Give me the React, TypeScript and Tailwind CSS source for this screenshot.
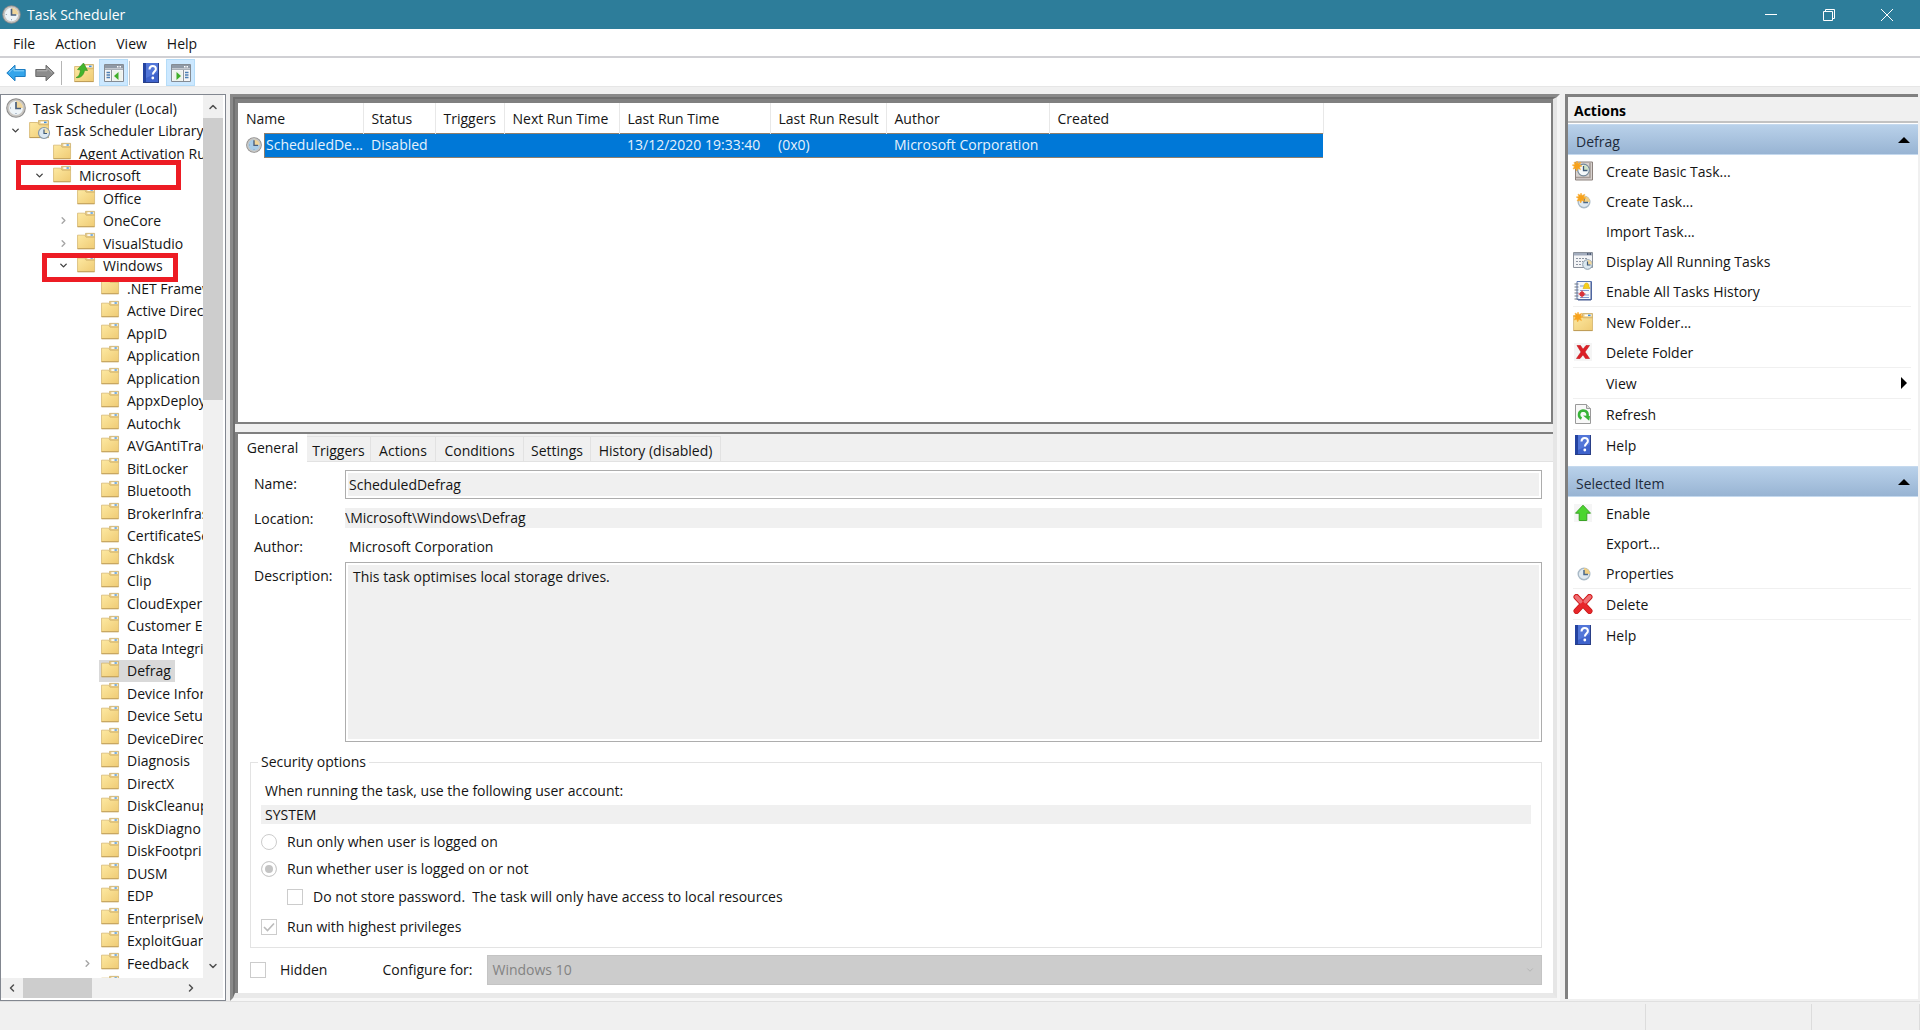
import React from 'react';
import clsx from 'clsx';
import { ChevronDown, ChevronLeft, ChevronRight, ChevronUp } from 'lucide-react';

type TreeNode = { label: string; level: number; state?: 'open' | 'closed'; selected?: boolean };

const TREE: TreeNode[] = [
  { label: 'Task Scheduler (Local)', level: 0 },
  { label: 'Task Scheduler Library', level: 1, state: 'open' },
  { label: 'Agent Activation Ru', level: 2 },
  { label: 'Microsoft', level: 2, state: 'open' },
  { label: 'Office', level: 3 },
  { label: 'OneCore', level: 3, state: 'closed' },
  { label: 'VisualStudio', level: 3, state: 'closed' },
  { label: 'Windows', level: 3, state: 'open' },
  { label: '.NET Framew', level: 4 },
  { label: 'Active Direc', level: 4 },
  { label: 'AppID', level: 4 },
  { label: 'Application', level: 4 },
  { label: 'Application', level: 4 },
  { label: 'AppxDeploy', level: 4 },
  { label: 'Autochk', level: 4 },
  { label: 'AVGAntiTrac', level: 4 },
  { label: 'BitLocker', level: 4 },
  { label: 'Bluetooth', level: 4 },
  { label: 'BrokerInfras', level: 4 },
  { label: 'CertificateSe', level: 4 },
  { label: 'Chkdsk', level: 4 },
  { label: 'Clip', level: 4 },
  { label: 'CloudExper', level: 4 },
  { label: 'Customer E', level: 4 },
  { label: 'Data Integri', level: 4 },
  { label: 'Defrag', level: 4, selected: true },
  { label: 'Device Infor', level: 4 },
  { label: 'Device Setu', level: 4 },
  { label: 'DeviceDirec', level: 4 },
  { label: 'Diagnosis', level: 4 },
  { label: 'DirectX', level: 4 },
  { label: 'DiskCleanup', level: 4 },
  { label: 'DiskDiagno', level: 4 },
  { label: 'DiskFootpri', level: 4 },
  { label: 'DUSM', level: 4 },
  { label: 'EDP', level: 4 },
  { label: 'EnterpriseM', level: 4 },
  { label: 'ExploitGuar', level: 4 },
  { label: 'Feedback', level: 4, state: 'closed' },
  { label: '', level: 4 },
];

const INDENT = ['pl-[5px]', 'pl-[4px]', 'pl-[28px]', 'pl-[52px]', 'pl-[76px]'];

const COLUMNS = [
  { label: 'Name', width: 'w-[125px]', value: 'ScheduledDe...' },
  { label: 'Status', width: 'w-[72px]', value: 'Disabled' },
  { label: 'Triggers', width: 'w-[69px]', value: '' },
  { label: 'Next Run Time', width: 'w-[115px]', value: '' },
  { label: 'Last Run Time', width: 'w-[151px]', value: '13/12/2020 19:33:40' },
  { label: 'Last Run Result', width: 'w-[116px]', value: '(0x0)' },
  { label: 'Author', width: 'w-[163px]', value: 'Microsoft Corporation' },
  { label: 'Created', width: 'w-[274px]', value: '' },
];

const TABS = [
  { label: 'Triggers', width: 'w-[64px]' },
  { label: 'Actions', width: 'w-[65px]' },
  { label: 'Conditions', width: 'w-[88px]' },
  { label: 'Settings', width: 'w-[67px]' },
  { label: 'History (disabled)', width: 'w-[130px]' },
];

function ClockIcon({ className, tint = '#eef4f8' }: { className?: string; tint?: string }) {
  return (
    <svg viewBox="0 0 20 20" className={className} aria-hidden="true">
      <circle cx="10" cy="10" r="9.800" fill="#8b8b8b" />
      <circle cx="10" cy="10" r="8.800" fill="#c9c6c2" />
      <circle cx="10" cy="10" r="7" fill={tint} />
      <path d="M10 10V3a7 7 0 0 1 7 7z" fill="#f0d59a" />
      <path d="M10 4v6.500h5" fill="none" stroke="#4a5f7c" strokeWidth="1.700" />
      <path d="M10 16v-1M4 10h1" stroke="#7a8fa5" strokeWidth="1" />
    </svg>
  );
}

function SmallClockIcon() {
  return (
    <svg viewBox="0 0 20 20" className="size-5" aria-hidden="true">
      <circle cx="11" cy="11" r="5.800" fill="#dfe9f1" stroke="#a9b9c6" strokeWidth="1.400" />
      <path d="M11 11V5a6 6 0 0 1 6 6z" fill="#f1cf83" />
      <path d="M11 7v4.500h4" fill="none" stroke="#4b6a8c" strokeWidth="1.500" />
    </svg>
  );
}

function Star({ x, y }: { x: number; y: number }) {
  return (
    <path
      transform={`translate(${x} ${y})`}
      d="M4 0l1 2.500 2.800-1.200-1.200 2.600L9 5 6.500 6l1 2.600-2.600-1.200L3.600 10 2.800 7.400 0 8l1.400-2.400L-.8 4l2.500-.4L1 1l2.300 1.200z"
      fill="#f7a21b"
      stroke="#f9ae38"
      strokeWidth=".6"
    />
  );
}

function FolderIcon({ variant }: { variant?: 'clock' | 'new' | 'up' }) {
  return (
    <svg viewBox="0 0 20 20" className={clsx('overflow-visible', variant ? 'size-5' : 'size-[18px]')} aria-hidden="true">
      <defs>
        <linearGradient id="folderFill" x1="0" y1="0" x2="1" y2="1">
          <stop offset="0" stopColor="#fde9a2" />
          <stop offset="1" stopColor="#efcb74" />
        </linearGradient>
      </defs>
      <path d="M9.500 4V1.500h10V6h-10z" fill="#e8cd8b" stroke="#c9ab66" strokeWidth=".8" />
      <path d="M11.500 2.500h7v1.800h-7z" fill="#fff" />
      <path d="M15 2.600h2.600v1.500H15z" fill="#3f8fdc" />
      <path d="M.6 3.500h8l1.500 2.300h9.400v12.700H.6z" fill="url(#folderFill)" stroke="#d3b26a" strokeWidth=".8" />
      <path d="M.6 18.600h18.900" stroke="#bd9b55" strokeWidth="1" />
      {variant === 'clock' && (
        <g>
          <circle cx="15" cy="14" r="5.500" fill="#dbe8f1" stroke="#8799a8" strokeWidth="1.200" />
          <path d="M15 14V9a5 5 0 0 1 5 5z" fill="#f1e2b0" />
          <path d="M15 10.500v4h3" fill="none" stroke="#3e5a78" strokeWidth="1.200" />
        </g>
      )}
      {variant === 'new' && <Star x={1} y={0} />}
      {variant === 'up' && (
        <path d="M2 14.500C5 14 6 10.500 6.500 7L3.500 6.500 9.500 0l4 7.500-3-.2C10 11.500 7 15.500 2 14.500z" fill="#42b52c" stroke="#2d8c1d" strokeWidth=".6" />
      )}
    </svg>
  );
}

function HelpIcon() {
  return (
    <svg viewBox="0 0 18 20" className="h-5 w-[18px]" aria-hidden="true">
      <path d="M1 0h16v20H1z" fill="#3f63cc" />
      <path d="M1 0h3v20H1z" fill="#2443a0" />
      <path d="M4 0h13v9L4 15z" fill="#5f83e0" opacity=".6" />
      <path d="M1 19h16v1H1zM16 0h1v20h-1z" fill="#2a3f86" />
      <path d="M7.500 6.500C7.500 4 9 3 10.700 3s3.200 1 3.200 3c0 2.500-3 2.700-3 5.500" fill="none" stroke="#fff" strokeWidth="2" />
      <circle cx="10.800" cy="15" r="1.400" fill="#fff" />
    </svg>
  );
}

function PaneIcon({ flip }: { flip?: boolean }) {
  return (
    <svg viewBox="0 0 20 18" className="h-[18px] w-5" aria-hidden="true">
      <path d="M.5.5h19v17H.5z" fill="#f5f6f7" stroke="#858c94" />
      <path d="M1 1h18v3.500H1z" fill="#8f99a6" />
      <path d="M13 2h1.500v1.500H13zM15.500 2H17v1.500h-1.500z" fill="#fff" />
      <path d="M1 5.500h18" stroke="#a9b0b8" />
      <g transform={flip ? 'translate(20 0) scale(-1 1)' : undefined}>
        <path d="M7.500 6v11" stroke="#8f969e" />
        <path d="M2.500 8.500H6M2.500 11H6M2.500 13.500H6" stroke="#4d7fb5" strokeWidth="1.300" />
        <path d="M9 7h9v10H9z" fill="#eef3ec" />
        <path d="M14.500 8v8L10 12z" fill="#3fae2a" />
      </g>
    </svg>
  );
}

function ToolbarArrow({ forward }: { forward?: boolean }) {
  return (
    <svg viewBox="0 0 20 18" className="h-[18px] w-5" aria-hidden="true">
      <g transform={forward ? 'translate(20 0) scale(-1 1)' : undefined}>
        <path
          d="M.8 9L9 1.200v4.300h10.200v7H9v4.300z"
          fill={forward ? '#8c8c8c' : '#35a5ea'}
          stroke={forward ? '#6c6c6c' : '#1c7cc2'}
        />
        <path d="M3 8.500L8 3.800v3h10" fill="none" stroke={forward ? '#b5b5b5' : '#8fd5fb'} />
      </g>
    </svg>
  );
}

function BasicTaskIcon() {
  return (
    <svg viewBox="0 0 20 20" className="size-5 overflow-visible" aria-hidden="true">
      <path d="M2.500 1h17v18h-17z" fill="#d8d2cf" stroke="#8b817c" />
      <path d="M17 2v14.500H3" fill="none" stroke="#a39994" strokeWidth="1.500" />
      <circle cx="10.500" cy="9" r="5.800" fill="#f4f8fa" stroke="#758b9b" strokeWidth="1.200" />
      <path d="M10.500 9V4a5 5 0 0 1 5 5z" fill="#cfe3c3" />
      <path d="M10.500 5v4.500h4" fill="none" stroke="#3e5a78" strokeWidth="1.300" />
      <Star x={0} y={0} />
    </svg>
  );
}

function CreateTaskIcon() {
  return (
    <svg viewBox="0 0 20 20" className="size-5" aria-hidden="true">
      <circle cx="11" cy="11" r="5.800" fill="#dfe9f1" stroke="#a9b9c6" strokeWidth="1.400" />
      <path d="M11 11V5a6 6 0 0 1 6 6z" fill="#f1cf83" />
      <path d="M11 7v4.500h4" fill="none" stroke="#4b6a8c" strokeWidth="1.500" />
      <Star x={4} y={2} />
    </svg>
  );
}

function RunningTasksIcon() {
  return (
    <svg viewBox="0 0 20 18" className="h-[18px] w-5" aria-hidden="true">
      <path d="M.5.500h19v15H.5z" fill="#f3f4f6" stroke="#8b919b" />
      <path d="M1 1h18v2.500H1z" fill="#a2acbd" />
      <path d="M14 1.200h1.500v1.500H14zM16.500 1.200H18v1.500h-1.500z" fill="#33415c" />
      <path d="M3 6.500h12M3 9.500h7M3 12.500h5" stroke="#8c94a0" strokeDasharray="2 1" />
      <circle cx="14.500" cy="12.500" r="4.800" fill="#dce8ef" stroke="#8799a8" />
      <path d="M14.500 12.500V8A4.500 4.500 0 0 1 19 12.500z" fill="#f0d59a" />
      <path d="M14.500 9.500V13h3" fill="none" stroke="#3e5a78" strokeWidth="1.200" />
    </svg>
  );
}

function HistoryIcon() {
  return (
    <svg viewBox="0 0 20 20" className="size-5" aria-hidden="true">
      <path d="M4 .5h14.500v18H4z" fill="#f4f7fc" stroke="#5b77b3" />
      <path d="M18 1v18H5" fill="none" stroke="#44598f" />
      <path d="M1.500 3h4M1.500 6h4M1.500 9h4M1.500 12h4M1.500 15h4M1.500 18h4" stroke="#6f7782" strokeWidth="1.200" />
      <path d="M7 5h9M7 9.500h9M7 14h9M7 16.500h9" stroke="#7f9bd0" />
      <path d="M13.500 2c2 0 2.500 2 2.500 3.500l1 2h-7l1-2C11 4 11.500 2 13.500 2z" fill="#f5cf1c" stroke="#dcae12" strokeWidth=".6" />
      <circle cx="9" cy="13" r="2.500" fill="#d8323b" />
      <path d="M9 9.500v7M5.500 13h7" stroke="#d8323b" strokeWidth="1.200" />
    </svg>
  );
}

function CrossIcon({ large }: { large?: boolean }) {
  if (large) {
    return (
      <svg viewBox="0 0 20 20" className="size-5" aria-hidden="true">
        <path d="M3.500 3l13 14M16.500 3l-13 14" stroke="#c51a1a" strokeWidth="6" strokeLinecap="round" />
        <path d="M3.500 3l13 14M16.500 3l-13 14" stroke="#e8262a" strokeWidth="4.500" strokeLinecap="round" />
        <path d="M3.500 3l4 4.300M16.500 3l-4 4.300" stroke="#ee7074" strokeWidth="4" strokeLinecap="round" />
      </svg>
    );
  }
  return (
    <svg viewBox="0 0 18 18" className="size-[18px]" aria-hidden="true">
      <path d="M0 0h18v18H0z" fill="#f5f5f5" />
      <path d="M3 2.500h3.500L9 6.200l3-3.700h3.500L11 9l4.500 6.500h-4L9 11.800l-3 3.700H2.500L7 9z" fill="#dc1f26" stroke="#c3151c" strokeWidth=".6" />
    </svg>
  );
}

function RefreshIcon() {
  return (
    <svg viewBox="0 0 18 20" className="h-5 w-[18px]" aria-hidden="true">
      <path d="M1.500.5h11l4 4v15h-15z" fill="#f8f8f8" stroke="#9a9a9a" />
      <path d="M12.500.5v4h4" fill="#ddd" stroke="#9a9a9a" />
      <path d="M7.500 14.500C4 13 4 7 9 6.500c4.500 0 5.500 4 4 7" fill="none" stroke="#36b336" strokeWidth="2.600" />
      <path d="M9 11.500l7 .5-.8 4.800z" fill="#36b336" />
    </svg>
  );
}

function EnableIcon() {
  return (
    <svg viewBox="0 0 18 18" className="size-[18px]" aria-hidden="true">
      <path d="M0 0h18v18H0z" fill="#f5f5f5" />
      <path d="M9 1.200l7.500 8h-3.700v7.300H5.200V9.200H1.500z" fill="#4cd52f" stroke="#3aa326" strokeLinejoin="round" />
    </svg>
  );
}

type Action = { label: string; icon?: React.ReactNode; submenu?: boolean };

const FOLDER_ACTIONS: Action[][] = [
  [
    { label: 'Create Basic Task...', icon: <BasicTaskIcon /> },
    { label: 'Create Task...', icon: <CreateTaskIcon /> },
    { label: 'Import Task...' },
    { label: 'Display All Running Tasks', icon: <RunningTasksIcon /> },
    { label: 'Enable All Tasks History', icon: <HistoryIcon /> },
  ],
  [
    { label: 'New Folder...', icon: <FolderIcon variant="new" /> },
    { label: 'Delete Folder', icon: <CrossIcon /> },
  ],
  [{ label: 'View', submenu: true }],
  [{ label: 'Refresh', icon: <RefreshIcon /> }],
  [{ label: 'Help', icon: <HelpIcon /> }],
];

const ITEM_ACTIONS: Action[][] = [
  [
    { label: 'Enable', icon: <EnableIcon /> },
    { label: 'Export...' },
    { label: 'Properties', icon: <SmallClockIcon /> },
  ],
  [{ label: 'Delete', icon: <CrossIcon large /> }],
  [{ label: 'Help', icon: <HelpIcon /> }],
];

function ActionSection({ title, groups }: { title: string; groups: Action[][] }) {
  return (
    <section className="mb-[6px]">
      <button className="flex h-[31px] w-full items-center justify-between border-y border-[#c5d9ee] bg-linear-to-b from-[#b9d1ea] to-[#98b4d3] pr-[8px] pl-[8px] text-[#1e2b3c]">
        <span className="pt-1">{title}</span>
        <svg viewBox="0 0 12 6" className="h-[6px] w-3" aria-hidden="true">
          <path d="M6 0l6 6H0z" />
        </svg>
      </button>
      {groups.map((group, i) => (
        <div key={i} className="mr-[7px] ml-[5px] border-[#f0f0f0] pt-px not-first-of-type:border-t not-first-of-type:pt-0">
          {group.map((action) => (
            <button key={action.label} className="flex h-[30px] w-full items-center">
              <span className="flex w-5 justify-center">{action.icon}</span>
              <span className="ml-[13px] flex-1 pt-px text-left">{action.label}</span>
              {action.submenu && (
                <svg viewBox="0 0 6 12" className="mr-[4px] h-3 w-[6px]" aria-hidden="true">
                  <path d="M0 0l6 6-6 6z" />
                </svg>
              )}
            </button>
          ))}
        </div>
      ))}
    </section>
  );
}

function TreeRow({ node }: { node: TreeNode }) {
  return (
    <li className={clsx('flex items-center whitespace-nowrap odd:h-[22px] even:h-[23px]', INDENT[node.level])}>
      {node.level > 0 && (
        <span className="mr-1 flex w-5 shrink-0 justify-center">
          {node.state === 'open' && <ChevronDown className="size-[11px] text-[#404040]" strokeWidth={3} />}
          {node.state === 'closed' && <ChevronRight className="size-[11px] text-[#a6a6a6]" strokeWidth={3} />}
        </span>
      )}
      <span className={clsx('-ml-[2px] flex h-[22px] shrink-0 items-center pr-[4px] pl-[2px]', node.selected && 'bg-[#d9d9d9]')}>
        <span className={clsx('shrink-0', node.level === 0 ? 'mr-[7px]' : node.level === 1 ? 'mr-[7px] pb-1' : 'mr-[8px] pb-1')}>
          {node.level === 0 ? <ClockIcon className="size-5" /> : <FolderIcon variant={node.level === 1 ? 'clock' : undefined} />}
        </span>
        <span className="pt-px">{node.label}</span>
      </span>
    </li>
  );
}

function TreePane() {
  return (
    <aside className="flex w-[226px] shrink-0 flex-col border border-[#828790] bg-white pr-[2px] pb-[2px]">
      <div className="flex min-h-0 flex-1">
        <div className="relative min-w-0 flex-1 overflow-hidden pt-[2px]">
          <ul>
            {TREE.map((node, i) => (
              <TreeRow key={i} node={node} />
            ))}
          </ul>
          {/* highlight boxes drawn over the tree */}
          <div className="absolute top-[65px] left-[15px] h-[30px] w-[165px] border-[5px] border-[#ed1c24]" />
          <div className="absolute top-[158px] left-[41px] h-[29px] w-[136px] border-[5px] border-[#ed1c24]" />
        </div>
        <div className="flex w-5 flex-col items-center bg-[#f0f0f0]">
          <button className="flex h-[23px] w-full items-center justify-center" aria-label="Scroll up">
            <ChevronUp className="size-3 text-[#505050]" strokeWidth={3} />
          </button>
          <div className="h-[282px] w-full bg-[#cdcdcd]" />
          <button className="mt-auto flex h-6 w-full items-center justify-center" aria-label="Scroll down">
            <ChevronDown className="size-3 text-[#505050]" strokeWidth={3} />
          </button>
        </div>
      </div>
      <div className="flex h-5 items-center bg-[#f0f0f0]">
        <button className="flex h-5 w-[22px] items-center justify-center" aria-label="Scroll left">
          <ChevronLeft className="size-3 text-[#505050]" strokeWidth={3} />
        </button>
        <div className="h-full w-[69px] bg-[#cdcdcd]" />
        <button className="mr-[21px] ml-auto flex h-5 w-[23px] items-center justify-center" aria-label="Scroll right">
          <ChevronRight className="size-3 text-[#505050]" strokeWidth={3} />
        </button>
      </div>
    </aside>
  );
}

function TaskTable() {
  return (
    <table className="table-fixed border-collapse text-left whitespace-nowrap">
      <thead>
        <tr className="h-[30px]">
          {COLUMNS.map((col) => (
            <th key={col.label} className={clsx('border-r border-[#e8e8e8] p-0 pt-[2px] pl-[8px] font-normal', col.width)}>
              {col.label}
            </th>
          ))}
        </tr>
      </thead>
      <tbody>
        <tr className="h-6 text-[#e6f2fc]">
          {COLUMNS.map((col, i) => (
            <td key={col.label} className={clsx('p-0', i > 0 && 'border-y border-[#8f7f6d] bg-[#0078d7] pl-[8px]')}>
              {i === 0 ? (
                <div className="flex h-6 items-center pl-[8px]">
                  <ClockIcon className="mr-[2px] size-4 shrink-0" tint="#a9cde8" />
                  <span className="-my-px flex h-[25px] flex-1 items-center overflow-hidden border-y border-l border-[#8f7f6d] bg-[#0078d7] pl-px">{col.value}</span>
                </div>
              ) : (
                col.value
              )}
            </td>
          ))}
        </tr>
      </tbody>
    </table>
  );
}

function GeneralTab() {
  const box = 'size-4 shrink-0 appearance-none border border-[#cccccc]';
  return (
    <div className="flex flex-1 flex-col bg-white pr-[11px] pl-[12px]">
      <div className="grid grid-cols-[91px_1fr] pt-[8px] pl-[4px]">
        <label htmlFor="name" className="pt-[4px]">Name:</label>
        <input id="name" readOnly defaultValue="ScheduledDefrag" className="h-[29px] border border-[#adadad] bg-[#f0f0f0] px-[3px] shadow-[inset_0_0_0_2px_#fff]" />
        <label htmlFor="location" className="mt-[10px]">Location:</label>
        <input id="location" readOnly defaultValue="\Microsoft\Windows\Defrag" className="mt-[9px] h-5 bg-[#f0f0f0]" />
        <span className="mt-[8px]">Author:</span>
        <span className="mt-[8px] pl-[4px]">Microsoft Corporation</span>
        <label htmlFor="description" className="mt-[9px]">Description:</label>
        <textarea
          id="description"
          readOnly
          defaultValue="This task optimises local storage drives."
          className="mt-[5px] h-[180px] resize-none border border-[#adadad] bg-[#f0f0f0] px-[7px] py-[4px] shadow-[inset_0_0_0_2px_#fff]"
        />
      </div>

      <fieldset className="mt-[10px] flex flex-col border border-[#e3e3e3] pr-[10px] pb-[10px] pl-[10px]">
        <legend className="-ml-[3px] px-[3px]">Security options</legend>
        <label htmlFor="account" className="mt-[9px] pl-[4px]">When running the task, use the following user account:</label>
        <input id="account" readOnly defaultValue="SYSTEM" className="mt-[4px] h-[19px] bg-[#f0f0f0] px-[4px]" />
        <label className="mt-[8px] flex items-center gap-[10px]">
          <input type="radio" name="logon" disabled className={clsx(box, 'rounded-full bg-white')} />
          Run only when user is logged on
        </label>
        <label className="mt-[7px] flex items-center gap-[10px]">
          <input type="radio" name="logon" disabled defaultChecked className={clsx(box, 'rounded-full bg-[#c4c4c4] shadow-[inset_0_0_0_3px_#fff]')} />
          Run whether user is logged on or not
        </label>
        <label className="mt-[8px] flex items-center gap-[10px] pl-[26px] whitespace-pre">
          <input type="checkbox" disabled className={clsx(box, 'bg-white')} />
          {'Do not store password.  The task will only have access to local resources'}
        </label>
        <label className="mt-[10px] flex items-center gap-[10px]">
          <span className="relative flex">
            <input type="checkbox" disabled defaultChecked className={clsx(box, 'bg-white')} />
            <svg viewBox="0 0 16 16" className="absolute inset-0 size-4" aria-hidden="true">
              <path d="M3 8l3.500 3.500L13 4.500" fill="none" stroke="#bbb" strokeWidth="1.600" />
            </svg>
          </span>
          Run with highest privileges
        </label>
      </fieldset>

      <div className="mt-[7px] flex h-[30px] items-center">
        <label className="flex items-center gap-[14px]">
          <input type="checkbox" disabled className={clsx(box, 'bg-white')} />
          Hidden
        </label>
        <label htmlFor="configure" className="ml-[55px]">Configure for:</label>
        <div className="relative ml-[15px] flex-1">
          <select id="configure" disabled className="h-[30px] w-full appearance-none border border-[#c4c4c4] bg-[#cccccc] px-[4px] text-[#838383] opacity-100">
            <option>Windows 10</option>
          </select>
          <ChevronDown className="absolute top-[10px] right-[7px] size-[10px] text-[#b0b0b0]" />
        </div>
      </div>
    </div>
  );
}

function DetailsPane() {
  return (
    <section className="flex flex-1 flex-col border-t-2 border-l-[3px] border-[#808080] bg-white">
      <div className="flex h-[28px] items-end bg-[#f0f0f0]" role="tablist">
        <button role="tab" aria-selected="true" className="h-[28px] w-[69px] bg-white">General</button>
        <div className="flex flex-1 border-b border-[#e2e2e2]">
          {TABS.map((tab) => (
            <button key={tab.label} role="tab" aria-selected="false" className={clsx('h-[25px] border-t border-r border-[#e2e2e2] pt-[4px] whitespace-nowrap', tab.width)}>
              {tab.label}
            </button>
          ))}
        </div>
      </div>
      <GeneralTab />
    </section>
  );
}

export default function App() {
  return (
    <div className="flex h-screen flex-col overflow-hidden bg-[#f0f0f0] font-['Open_Sans','Noto_Sans',sans-serif] text-[14px] leading-[20px] text-[#141414]">
      <header className="flex h-[29px] shrink-0 items-center bg-[#2d7d9a] pl-[2px] text-white">
        <ClockIcon className="size-[19px]" />
        <h1 className="ml-[6px] text-[14px]">Task Scheduler</h1>
        <div className="ml-auto flex">
          <button className="flex h-[29px] w-[58px] items-center justify-center" aria-label="Minimize">
            <svg viewBox="0 0 12 12" className="size-3" stroke="#fff"><path d="M0 5.500h12" /></svg>
          </button>
          <button className="flex h-[29px] w-[58px] items-center justify-center" aria-label="Restore">
            <svg viewBox="0 0 12 12" className="size-3" fill="none" stroke="#fff"><path d="M.5 2.500h9v9h-9zM2.500 2.500v-2h9v9h-2" /></svg>
          </button>
          <button className="mr-[4px] flex h-[29px] w-[58px] items-center justify-center" aria-label="Close">
            <svg viewBox="0 0 12 12" className="size-3" stroke="#fff"><path d="M0 0l12 12M12 0L0 12" /></svg>
          </button>
        </div>
      </header>

      <nav className="flex h-[29px] shrink-0 items-center gap-[20px] border-b-2 border-[#d0d0d4] bg-white pt-[2px] pl-[13px]">
        <button>File</button>
        <button>Action</button>
        <button>View</button>
        <button>Help</button>
      </nav>

      <div className="flex h-[29px] shrink-0 items-center border-b border-[#e6e6e6] bg-white pt-px pl-[6px]">
        <button aria-label="Back"><ToolbarArrow /></button>
        <button className="ml-[9px]" aria-label="Forward"><ToolbarArrow forward /></button>
        <div className="mr-[12px] ml-[6px] h-6 w-px bg-[#b5b5b5]" />
        <button aria-label="Up one level"><FolderIcon variant="up" /></button>
        <button className="ml-[5px] flex h-[27px] w-[29px] items-center justify-center border border-[#b5dcf8] bg-[#cce8ff]" aria-label="Show console tree"><PaneIcon /></button>
        <div className="mr-[12px] ml-px h-6 w-px bg-[#c5c5c5]" />
        <button aria-label="Help"><HelpIcon /></button>
        <button className="ml-[6px] flex h-[27px] w-[29px] items-center justify-center border border-[#b5dcf8] bg-[#cce8ff]" aria-label="Show action pane"><PaneIcon flip /></button>
      </div>

      <main className="flex min-h-0 flex-1 pt-[7px]">
        <TreePane />
        <div className="ml-[4px] flex min-w-0 flex-1 border-[3px] border-t-[#8a8a8a] border-r-[#f6f6f6] border-b-[#f6f6f6] border-l-[#8a8a8a]">
          <div className="flex min-w-0 flex-1 flex-col border-t-2 border-r-4 border-b-[5px] border-l-2 border-t-[#6f6f6f] border-r-[#e6e6e6] border-b-[#e9e9e9] border-l-[#6f6f6f]">
            <section className="h-[325px] shrink-0 overflow-hidden border-t-4 border-r-2 border-b-2 border-l-[3px] border-[#808080] bg-white">
              <TaskTable />
            </section>
            <div className="h-2 shrink-0 bg-[#f0f0f0]" />
            <DetailsPane />
          </div>
        </div>

        <aside className="mr-[2px] mb-[2px] ml-[5px] w-[353px] shrink-0 border-t-[3px] border-l-[3px] border-[#808080] bg-white">
          <h2 className="flex h-[26px] items-center border-b-2 border-[#c2c2c2] bg-[#f0f0f0] pt-[4px] pl-[6px] font-bold text-black">Actions</h2>
          <div className="pt-px">
            <ActionSection title="Defrag" groups={FOLDER_ACTIONS} />
            <ActionSection title="Selected Item" groups={ITEM_ACTIONS} />
          </div>
        </aside>
      </main>

      <footer className="flex h-[29px] shrink-0 justify-end border-t border-[#e0e0e0] pt-[2px]">
        <div className="w-[166px] border-l border-[#dcdcdc]" />
        <div className="w-[109px] border-x border-[#dcdcdc]" />
      </footer>
    </div>
  );
}
